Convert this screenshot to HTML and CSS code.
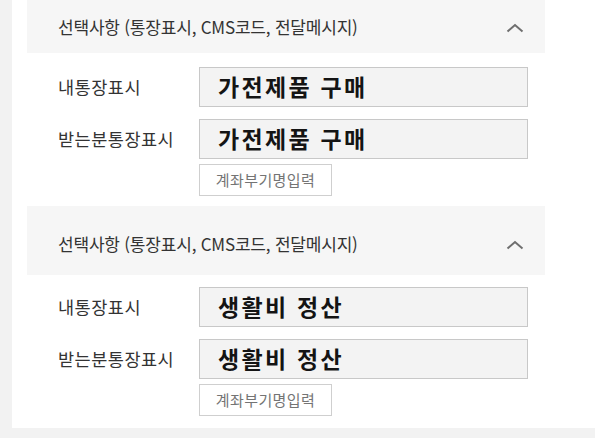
FILE: index.html
```html
<!DOCTYPE html>
<html lang="ko">
<head>
<meta charset="utf-8">
<link rel="stylesheet" href="styles.css">
</head>
<body>
<div class="panel">
  <section class="opt opt-first">
    <div class="opt-head head-a">
      <span class="opt-title">선택사항 (통장표시, CMS코드, 전달메시지)</span>
      <svg class="chev" width="18" height="10" viewBox="0 0 18 10"><path d="M1.5 8.5 L9 2 L16.5 8.5" fill="none" stroke="#6f6f6f" stroke-width="2"/></svg>
    </div>
    <div class="rows rows-a">
      <div class="row">
        <span class="lbl">내통장표시</span>
        <div class="field">가전제품 구매</div>
      </div>
      <div class="row">
        <span class="lbl">받는분통장표시</span>
        <div class="field">가전제품 구매</div>
      </div>
      <div class="row">
        <span></span>
        <div><button class="btn">계좌부기명입력</button></div>
      </div>
    </div>
  </section>
  <section class="opt">
    <div class="opt-head head-b">
      <span class="opt-title">선택사항 (통장표시, CMS코드, 전달메시지)</span>
      <svg class="chev" width="18" height="10" viewBox="0 0 18 10"><path d="M1.5 8.5 L9 2 L16.5 8.5" fill="none" stroke="#6f6f6f" stroke-width="2"/></svg>
    </div>
    <div class="rows rows-b">
      <div class="row">
        <span class="lbl">내통장표시</span>
        <div class="field">생활비 정산</div>
      </div>
      <div class="row">
        <span class="lbl">받는분통장표시</span>
        <div class="field">생활비 정산</div>
      </div>
      <div class="row">
        <span></span>
        <div><button class="btn">계좌부기명입력</button></div>
      </div>
    </div>
  </section>
</div>
</body>
</html>
```

FILE: styles.css
```css
html, body {
  margin: 0;
  padding: 0;
  background: #f2f2f2;
  width: 595px;
  height: 438px;
  overflow: hidden;
  font-family: "Noto Sans CJK KR", "Noto Sans", sans-serif;
  color: #333;
}
.panel {
  margin-left: 12px;
  height: 428px;
  background: #fff;
  box-sizing: border-box;
  padding-left: 15px;
  padding-right: 50px;
}
.opt-head {
  background: #f6f6f6;
  display: flex;
  align-items: center;
  justify-content: space-between;
  padding-left: 31px;
  padding-right: 21px;
  box-sizing: border-box;
}
.head-a { height: 53px; }
.head-b { height: 69px; padding-top: 6px; }
.opt-title {
  font-size: 17px;
  letter-spacing: -0.2px;
  line-height: 20px;
  color: #333;
}
.chev { display: block; margin-top: 2px; }
.rows {
  display: flex;
  flex-direction: column;
  gap: 12px;
  padding-left: 31px;
}
.rows-a { padding-top: 14px; padding-bottom: 10px; }
.rows-b { padding-top: 12px; }
.row {
  display: grid;
  grid-template-columns: 141px 329px;
  align-items: center;
}
.row:last-child { margin-top: -7px; }
.lbl {
  font-size: 17.5px;
  letter-spacing: 0.5px;
  line-height: 20px;
  color: #333;
}
.field {
  height: 40px;
  box-sizing: border-box;
  border: 1px solid #c8c8c8;
  background: #f3f3f3;
  padding-left: 18px;
  font-size: 23px;
  font-weight: 700;
  letter-spacing: 2.3px;
  line-height: 36px;
  color: #141414;
  white-space: pre;
}
.btn {
  height: 32px;
  width: 133px;
  box-sizing: border-box;
  border: 1px solid #cfcfcf;
  background: #fff;
  font-family: inherit;
  font-size: 15px;
  letter-spacing: 0.4px;
  color: #747474;
  padding: 0;
  line-height: 28px;
}
```
